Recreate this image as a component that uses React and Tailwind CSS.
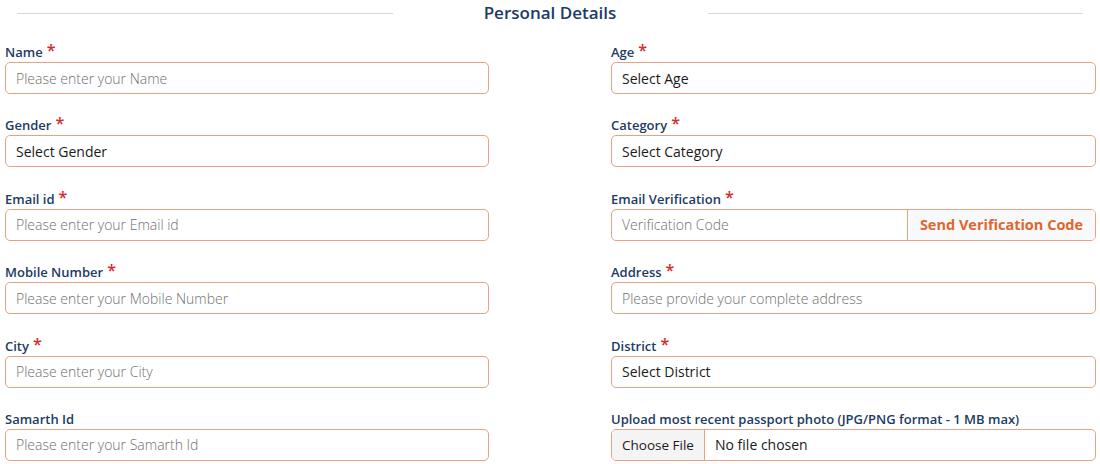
import React from "react";

const font = { fontFamily: '"Open Sans", "Noto Sans", Arial, sans-serif' };

function Label({ text, required }) {
  return (
    <div className="h-[18px] mb-[2px] flex items-start text-[13px] leading-[20px] font-semibold text-[#1d3b63]">
      <span>{text}</span>
      {required && (
        <span className="ml-[4px] text-[16px] leading-[16px] text-[#d42a2a] font-semibold">*</span>
      )}
    </div>
  );
}

function TextField({ label, required, placeholder }) {
  return (
    <div>
      <Label text={label} required={required} />
      <div className="h-[32px] rounded-[5px] border border-[#e7a285] bg-white flex items-center px-[10px] text-[14px] font-light text-[#6f6f6f]">
        {placeholder}
      </div>
    </div>
  );
}

function SelectField({ label, required, value }) {
  return (
    <div>
      <Label text={label} required={required} />
      <div className="h-[32px] rounded-[5px] border border-[#e7a285] bg-white flex items-center px-[10px] text-[14px] text-[#1a1a1a]">
        {value}
      </div>
    </div>
  );
}

export default function App() {
  return (
    <div className="w-[1100px] h-[464px] bg-white overflow-hidden" style={font}>
      <div className="flex items-center h-[26px] px-[17px]">
        <div className="flex-1 h-px bg-[#d3dbe0]" />
        <div className="w-[315px] text-center text-[17px] font-semibold text-[#1d3b63]">
          Personal Details
        </div>
        <div className="flex-1 h-px bg-[#d3dbe0]" />
      </div>
      <div className="mt-[16px] pl-[5px] grid grid-cols-[484px_485px] gap-x-[122px] gap-y-[21.4px]">
        <TextField label="Name" required placeholder="Please enter your Name" />
        <SelectField label="Age" required value="Select Age" />
        <SelectField label="Gender" required value="Select Gender" />
        <SelectField label="Category" required value="Select Category" />
        <TextField label="Email id" required placeholder="Please enter your Email id" />
        <div>
          <Label text="Email Verification" required />
          <div className="h-[32px] rounded-[5px] border border-[#e7a285] bg-white flex overflow-hidden">
            <div className="flex-1 flex items-center px-[10px] text-[14px] font-light text-[#6f6f6f]">
              Verification Code
            </div>
            <div className="w-[188px] flex items-center justify-center border-l border-[#e7a285] bg-[#f8f9fa] text-[14.5px] font-bold text-[#e0652f]">
              Send Verification Code
            </div>
          </div>
        </div>
        <TextField label="Mobile Number" required placeholder="Please enter your Mobile Number" />
        <TextField label="Address" required placeholder="Please provide your complete address" />
        <TextField label="City" required placeholder="Please enter your City" />
        <SelectField label="District" required value="Select District" />
        <TextField label="Samarth Id" placeholder="Please enter your Samarth Id" />
        <div>
          <Label text="Upload most recent passport photo (JPG/PNG format - 1 MB max)" />
          <div className="h-[32px] rounded-[5px] border border-[#e7a285] bg-white flex overflow-hidden text-[14px] text-[#1a1a1a]">
            <div className="w-[93px] flex items-center justify-center bg-[#f4f4f5] border-r border-[#e7a285] text-[13.5px]">
              Choose File
            </div>
            <div className="flex items-center px-[10px]">No file chosen</div>
          </div>
        </div>
      </div>
    </div>
  );
}
